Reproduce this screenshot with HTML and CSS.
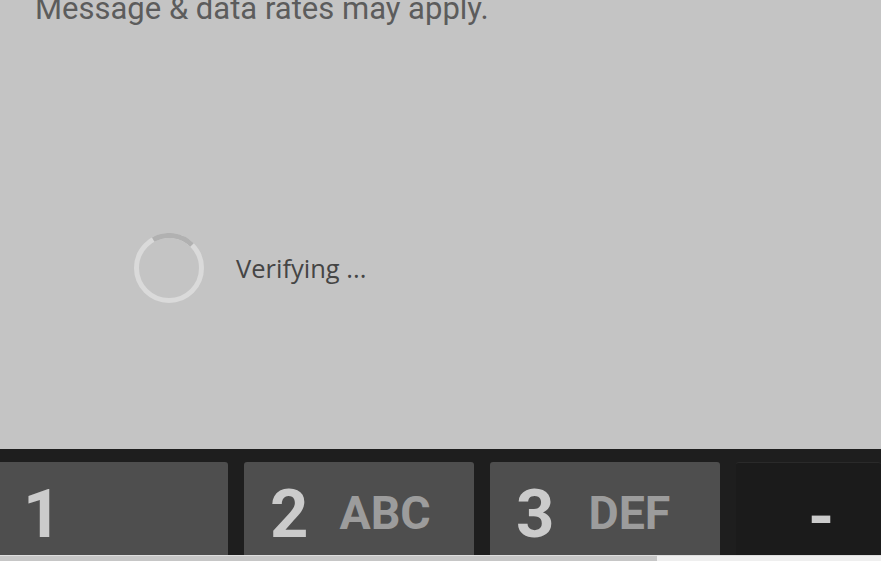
FILE: index.html
```html
<!DOCTYPE html>
<html lang="en">
<head>
  <meta charset="UTF-8" />
  <meta name="viewport" content="width=device-width, initial-scale=1" />
  <title>Verify number</title>
  <link rel="stylesheet" href="styles.css">
</head>
<body>
  <main class="screen">
    <p class="notice">Message &amp; data rates may apply.</p>

    <div class="progress">
      <svg class="spinner" width="70" height="70" viewBox="0 0 70 70">
        <circle cx="35" cy="35" r="32.5" fill="none" stroke="#dadada" stroke-width="5" />
        <path d="M19.2 6.6 A32.5 32.5 0 0 1 58 12" fill="none" stroke="#b1b1b1" stroke-width="5" />
      </svg>
      <span class="progress-text">Verifying ...</span>
    </div>
  </main>

  <div class="keyboard">
    <div class="key key-first"><span class="digit">1</span></div>
    <div class="key"><span class="digit">2</span><span class="letters">ABC</span></div>
    <div class="key"><span class="digit">3</span><span class="letters letters-wide">DEF</span></div>
    <div class="key key-dark"><span class="digit dash">-</span></div>
  </div>

  <div class="navstrip">
    <div class="navstrip-left"></div>
    <div class="navstrip-right"></div>
  </div>
</body>
</html>
```

FILE: styles.css
```css
html, body {
  margin: 0;
  padding: 0;
  height: 561px;
  overflow: hidden;
}

body {
  background-color: #c4c4c4;
  font-family: Roboto, 'Liberation Sans', sans-serif;
  display: flex;
  flex-direction: column;
}

.screen {
  height: 449px;
  flex-shrink: 0;
  background-color: #c4c4c4;
}

.notice {
  margin: 0;
  padding-left: 35px;
  font-size: 31px;
  line-height: 17px;
  color: #5c5c5c;
}

.progress {
  display: flex;
  align-items: center;
  gap: 32px;
  margin-top: 216px;
  padding-left: 134px;
}

.spinner {
  display: block;
  flex-shrink: 0;
}

.progress-text {
  font-family: 'Open Sans', sans-serif;
  font-size: 25.5px;
  color: #454545;
}

.keyboard {
  height: 106px;
  flex-shrink: 0;
  box-sizing: border-box;
  padding-top: 13px;
  background-color: #1e1e1e;
  display: grid;
  grid-template-columns: 228px 230px 230px 1fr;
  column-gap: 16px;
}

.key {
  background-color: #4e4e4e;
  border-radius: 3px 3px 0 0;
  padding: 19px 0 0 26px;
  font-weight: 700;
  line-height: 1;
  white-space: nowrap;
}

.key-first {
  border-top-left-radius: 0;
  padding-left: 23px;
}

.digit {
  font-size: 67px;
  color: #cbcbcb;
}

.letters {
  font-size: 46.5px;
  color: #9c9c9c;
  margin-left: 31px;
  vertical-align: 8px;
}

.letters-wide {
  margin-left: 34px;
}

.key-dark {
  background-color: #1b1b1b;
  border-top: 1px solid #2a2a2a;
  padding-top: 21px;
  padding-left: 72px;
}

.dash {
  vertical-align: 3px;
}

.navstrip {
  height: 5px;
  flex-shrink: 0;
  display: flex;
  border-top: 1px solid #dedede;
}

.navstrip-left {
  width: 657px;
  background-color: #c6c6c6;
}

.navstrip-right {
  flex: 1;
  background-color: #efefef;
}
```
